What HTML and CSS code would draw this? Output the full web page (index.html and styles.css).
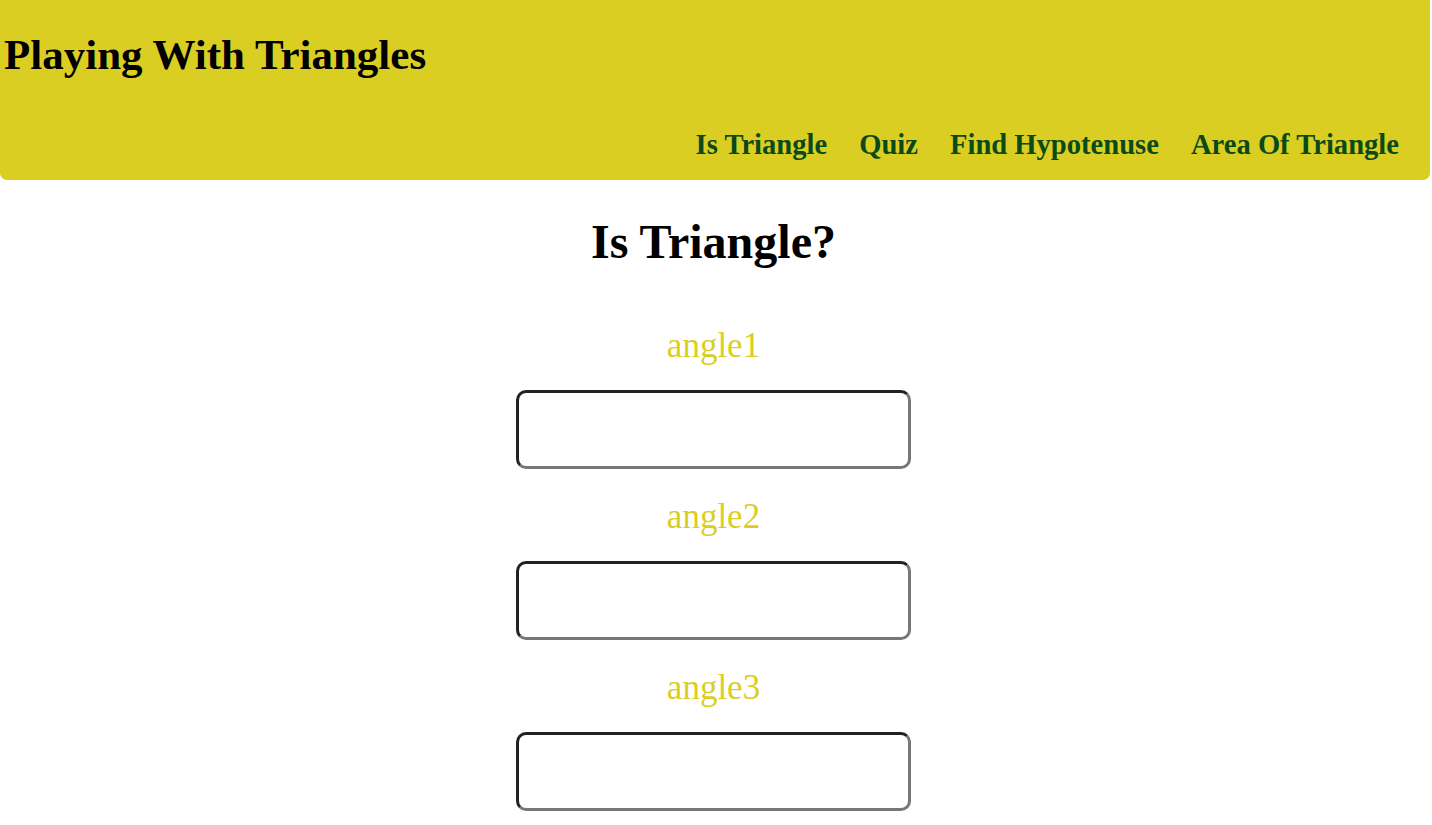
FILE: index.html
```html
<!DOCTYPE html>
<html lang="en">
<head>
<meta charset="utf-8">
<title>Playing With Triangles</title>
<link rel="stylesheet" href="styles.css">
</head>
<body>
<header class="site-header">
  <h1 class="site-title">Playing With Triangles</h1>
  <nav class="site-nav">
    <a class="nav-link" href="#">Is Triangle</a>
    <a class="nav-link" href="#">Quiz</a>
    <a class="nav-link" href="#">Find Hypotenuse</a>
    <a class="nav-link" href="#">Area Of Triangle</a>
  </nav>
</header>
<main class="content">
  <h2 class="page-title">Is Triangle?</h2>
  <form class="angle-form">
    <label class="field-label" for="a1">angle1</label>
    <input class="field-input" id="a1" type="number">
    <label class="field-label" for="a2">angle2</label>
    <input class="field-input" id="a2" type="number">
    <label class="field-label" for="a3">angle3</label>
    <input class="field-input" id="a3" type="number">
  </form>
</main>
</body>
</html>
```
FILE: styles.css
```css
html, body {
  margin: 0;
  padding: 0;
  background: #ffffff;
  font-family: "Liberation Serif", "Times New Roman", serif;
}
.site-header {
  background: #dbce23;
  border-radius: 0 0 7px 7px;
  margin-right: 2px;
  height: 180px;
  display: flex;
  flex-direction: column;
  justify-content: space-between;
  box-sizing: border-box;
  padding: 30px 31px 20px 4px;
}
.site-title {
  margin: 0;
  font-size: 43px;
  font-weight: bold;
  color: #000;
  line-height: 50px;
}
.site-nav {
  display: flex;
  justify-content: flex-end;
  gap: 32px;
}
.nav-link {
  color: #0a4a16;
  font-weight: bold;
  font-size: 28.6px;
  text-decoration: none;
  line-height: 30px;
}
.content {
  display: flex;
  flex-direction: column;
  align-items: center;
  padding-right: 5px;
}
.page-title {
  margin: 32px 0 0;
  font-size: 48px;
  font-weight: bold;
  line-height: 60px;
}
.angle-form {
  display: flex;
  flex-direction: column;
  align-items: center;
  margin-top: 53px;
}
.field-label {
  color: #dbce23;
  font-size: 35px;
  line-height: 41px;
  margin-bottom: 24px;
}
.field-input {
  width: 395px;
  height: 79px;
  box-sizing: border-box;
  border-width: 3px;
  border-style: solid;
  border-top-color: #222;
  border-left-color: #222;
  border-right-color: #777;
  border-bottom-color: #777;
  border-radius: 10px;
  margin-bottom: 27px;
  font-size: 24px;
  padding: 0 10px;
}
```
